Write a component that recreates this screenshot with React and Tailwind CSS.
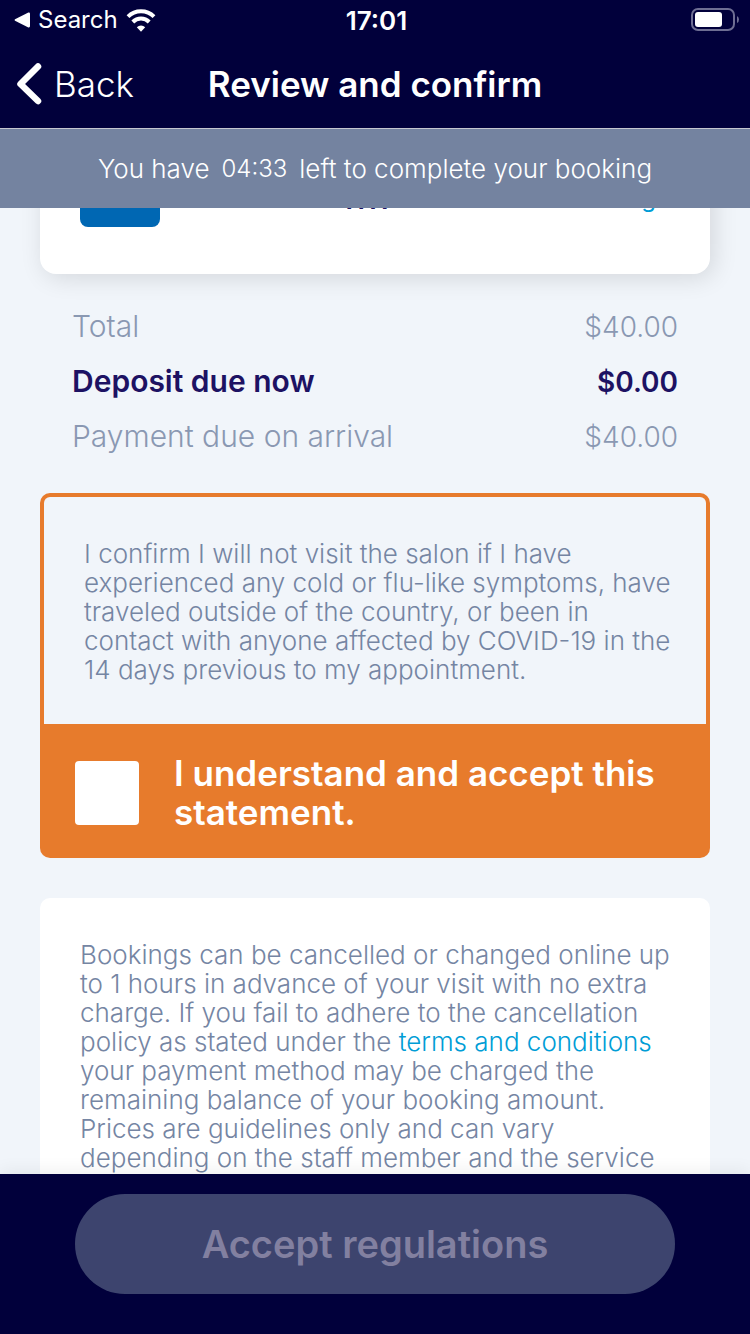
import React, { useState } from 'react';

const totals = [
  { label: 'Total', amount: '$40.00' },
  { label: 'Deposit due now', amount: '$0.00', highlight: true },
  { label: 'Payment due on arrival', amount: '$40.00' },
];

const StatusBar = () => (
  <div className="flex h-10 items-center justify-between pl-3.5 pr-[11px]">
    <div className="flex flex-1 items-center gap-2">
      <svg className="h-4 w-4" viewBox="0 0 16 16" fill="white">
        <path d="M1 7.2 L14.4 0.6 Q16 0.2 16 2 V14 Q16 15.8 14.4 15.4 L1 8.8 Q0 8 1 7.2 Z" />
      </svg>
      <span className="text-2xl">Search</span>
      <svg className="h-[23px] w-[30px]" viewBox="0 0 30 23" fill="none" stroke="white" strokeWidth="4">
        <path d="M2 7.6 A18.5 18.5 0 0 1 28 7.6" />
        <path d="M6.8 13 A11.6 11.6 0 0 1 23.2 13" />
        <path d="M15 22.7 L10.8 18.3 A6 6 0 0 1 19.2 18.3 Z" fill="white" stroke="none" />
      </svg>
    </div>
    <span className="text-[26px] font-semibold">17:01</span>
    <div className="flex flex-1 justify-end">
      <svg className="h-6 w-12" viewBox="0 0 48 24">
        <rect x="1" y="1" width="42" height="21" rx="6" fill="none" stroke="#6e6e93" strokeWidth="2" />
        <rect x="4" y="4" width="27" height="15" rx="3" fill="white" />
        <path d="M46 8 Q48 9 48 11.5 Q48 14 46 15 Z" fill="#6e6e93" />
      </svg>
    </div>
  </div>
);

const App = () => {
  const [accepted, setAccepted] = useState(false);

  return (
    <div className="flex h-screen flex-col bg-[#f1f5fa] font-['Inter',sans-serif] text-[#7585a3]">
      <header className="bg-[#01003b] text-white">
        <StatusBar />
        <nav className="grid h-22 grid-cols-[1fr_auto_1fr] items-center px-4">
          <button className="flex items-center gap-2.5 text-[35px] font-light">
            <svg className="h-11 w-7" viewBox="0 0 28 44" fill="none" stroke="white" strokeWidth="6.5" strokeLinecap="round" strokeLinejoin="round">
              <path d="M22 4.5 L4.5 22 L22 39" />
            </svg>
            Back
          </button>
          <h1 className="text-[35px] font-semibold">Review and confirm</h1>
        </nav>
      </header>
      <div className="flex h-20 items-center justify-center gap-3 border-t border-[#c4c6cf] bg-[#7483a0] text-[26px] font-light text-white">
        <span>You have</span>
        <time className="text-2xl font-light">04:33</time>
        <span>left to complete your booking</span>
      </div>

      <main className="min-h-0 flex-1 overflow-hidden px-10">
        {/* payment card, scrolled up under the countdown */}
        <section className="-mt-20 flex h-[146px] items-end justify-between rounded-2xl bg-white px-10 pb-[47px] shadow-[4px_4px_24px_rgba(0,0,0,0.12)]">
          <div className="h-12 w-20 rounded-lg bg-[#0067b3]" />
          <span className="mb-3.5 text-[28px] font-semibold leading-7 text-[#1d1263]">1111</span>
          <a href="#change" className="mb-3.5 min-w-[100px] text-right text-2xl leading-7 text-[#009dd6]">Change</a>
        </section>

        <dl className="px-8 pt-[25px]">
          {totals.map((row) => (
            <div
              key={row.label}
              className={row.highlight
                ? 'flex h-[55px] items-center justify-between text-[30px] font-semibold text-[#1d1263]'
                : 'flex h-[55px] items-center justify-between text-[30px] font-light text-[#8a98b2]'}
            >
              <dt>{row.label}</dt>
              <dd className="text-[28px]">{row.amount}</dd>
            </div>
          ))}
        </dl>

        <section className="mt-[29px] rounded-[10px] bg-[#e77b2c] px-1 pt-1">
          <p className="rounded-t-md bg-[#f1f5fa] pb-10 pl-10 pr-7 pt-[42px] text-[26px] font-light leading-[29px]">
            I confirm I will not visit the salon if I have experienced any cold or flu-like symptoms, have traveled outside of the country, or been in contact with anyone affected by COVID-19 in the 14 days previous to my appointment.
          </p>
          <label className="flex items-center gap-[35px] px-[31px] pb-[26px] pt-[30px] text-[35px] font-semibold leading-[39px] text-white">
            <input
              type="checkbox"
              checked={accepted}
              onChange={(e) => setAccepted(e.target.checked)}
              className="h-16 w-16 shrink-0 appearance-none rounded bg-white"
            />
            <span>I understand and accept this statement.</span>
          </label>
        </section>

        <section className="mt-10 rounded-[10px] bg-white pb-10 pl-10 pr-7 pt-[42px] text-[26px] font-light leading-[29px]">
          <p>
            Bookings can be cancelled or changed online up to 1 hours in advance of your visit with no extra charge. If you fail to adhere to the cancellation policy as stated under the{' '}
            <a href="#terms" className="text-[#009dd6]">terms and conditions</a>{' '}
            your payment method may be charged the remaining balance of your booking amount. Prices are guidelines only and can vary depending on the staff member and the service
          </p>
        </section>
      </main>

      <footer className="flex h-40 items-start justify-center bg-[#01003b] px-[75px] pt-5 shadow-[0_-4px_16px_rgba(0,0,0,0.06)]">
        <button disabled={!accepted} className="h-[100px] w-full rounded-full bg-[#3d446e] text-[38px] font-semibold text-[#8280a0]">
          Accept regulations
        </button>
      </footer>
    </div>
  );
};

export default App;
